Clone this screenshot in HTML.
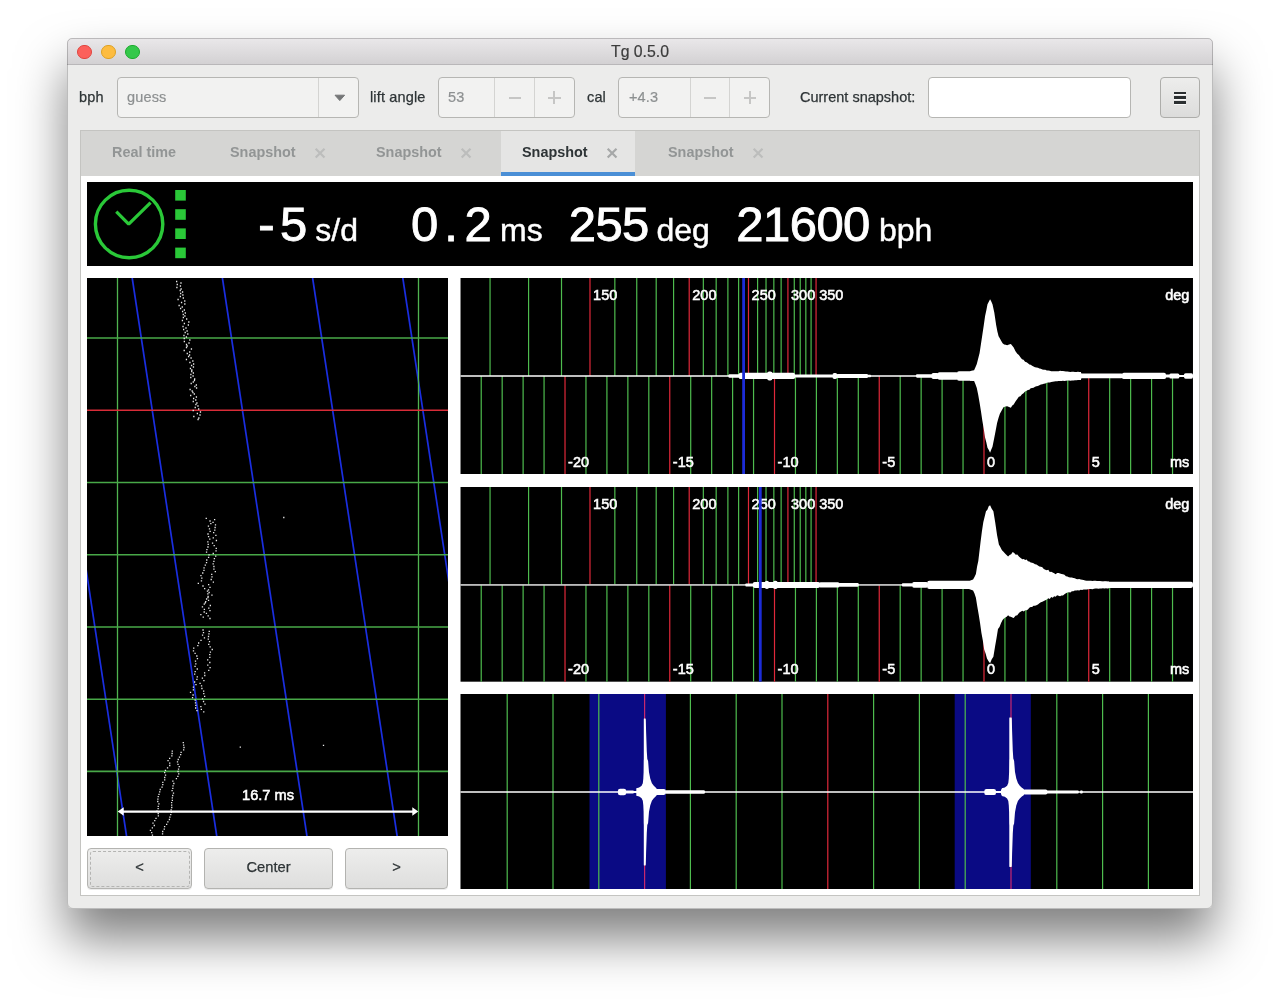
<!DOCTYPE html>
<html><head><meta charset="utf-8"><title>Tg 0.5.0</title>
<style>
*{box-sizing:border-box;margin:0;padding:0}
html,body{width:1280px;height:1005px;background:#fff;overflow:hidden}
body{position:relative;font-family:"Liberation Sans",sans-serif;font-size:14px;color:#2e3436}
.abs{position:absolute}
#win{will-change:transform;position:absolute;left:67px;top:38px;width:1146px;height:871px;background:#ececeb;border-radius:5px 5px 6px 6px;
 box-shadow:0 30px 50px rgba(0,0,0,.5)}
#title{position:absolute;left:0;top:0;width:1146px;height:27px;border-radius:5px 5px 0 0;
 background:linear-gradient(#eae8ea,#d3d1d3);border-bottom:1px solid #b9b7b9;text-align:center;
 font-size:15.8px;line-height:28px;color:#3c3c3c;-webkit-text-stroke:.2px #3c3c3c}
#win::after{content:"";position:absolute;left:0;top:0;right:0;bottom:0;border:1px solid rgba(0,0,0,.2);border-radius:5px 5px 6px 6px;pointer-events:none}
.tl{position:absolute;top:6.5px;width:14.6px;height:14.6px;border-radius:50%}
.lbl{position:absolute;font-size:14.5px;letter-spacing:.15px;line-height:16px;color:#2e3436;white-space:nowrap;-webkit-text-stroke:.25px #2e3436}
.box{position:absolute;top:39px;height:41px;border:1px solid #b6b6b3;border-radius:4px;background:#f2f2f1}
.sep{position:absolute;top:0;width:1px;height:39px;background:#d4d4d2}
.dim{position:absolute;color:#8d9091;font-size:14.5px;letter-spacing:.15px;line-height:16px;white-space:nowrap;-webkit-text-stroke:.2px #8d9091}
.pm{position:absolute;color:#c4c4c3;font-size:22px;line-height:22px;font-weight:400}
#nb{position:absolute;left:13px;top:92px;width:1120px;height:766px;background:#fff;border:1px solid #c4c4c1}
#tabs{position:absolute;left:0;top:0;width:1118px;height:44.7px;background:#d5d5d3}
.tab{position:absolute;top:0;height:44px;font-weight:bold;font-size:14.4px;line-height:16px;color:#929595;white-space:nowrap}
.tab span{position:absolute;top:13px}
.btn{position:absolute;top:811px;height:41px;border:1px solid #b3b3b0;border-radius:4px;
 background:linear-gradient(#ededec,#dededd);box-shadow:0 1px 0 rgba(0,0,0,.08);text-align:center;font-size:14.7px;line-height:37px;color:#2e3436;-webkit-text-stroke:.25px #2e3436}
.big{position:absolute;color:#fff;white-space:nowrap;font-size:49px;line-height:48px;-webkit-text-stroke:0.9px #fff}
.unit{position:absolute;color:#fff;white-space:nowrap;font-size:32px;line-height:32px;-webkit-text-stroke:0.45px #fff}
svg{position:absolute;display:block}
svg text{font-family:"Liberation Sans",sans-serif;fill:#fff}
svg text.b{font-weight:bold}
svg text.m{stroke:#fff;stroke-width:.55px}
</style></head>
<body>
<div id="win">
<div id="title">Tg 0.5.0<div class="tl" style="left:10.1px;background:#fc605b;border:1px solid #e0443e"></div><div class="tl" style="left:34.1px;background:#fdbc40;border:1px solid #dea123"></div><div class="tl" style="left:58.1px;background:#34c84a;border:1px solid #1baa2c"></div></div>
<div class="lbl" style="left:12px;top:51px">bph</div>
<div class="box" style="left:50px;width:242px"><div class="dim" style="left:9px;top:11px">guess</div><div class="sep" style="left:200px"></div><svg style="left:215px;top:16px" width="14" height="8"><path d="M2 1.2h9.6l-4.8 5.4z" fill="#747677" stroke="#747677" stroke-width="1" stroke-linejoin="round"/></svg></div>
<div class="lbl" style="left:303px;top:51px">lift angle</div>
<div class="box" style="left:371px;width:137px"><div class="dim" style="left:9px;top:11px">53</div><div class="sep" style="left:55px"></div><div class="sep" style="left:95px"></div><div class="abs" style="left:69.5px;top:18.5px;width:12.5px;height:2px;background:#c6c6c5"></div><div class="abs" style="left:109px;top:18.5px;width:12.5px;height:2px;background:#c6c6c5"></div><div class="abs" style="left:114.3px;top:13.2px;width:2px;height:12.5px;background:#c6c6c5"></div></div>
<div class="lbl" style="left:520px;top:51px">cal</div>
<div class="box" style="left:551px;width:152px"><div class="dim" style="left:10px;top:11px">+4.3</div><div class="sep" style="left:70.5px"></div><div class="sep" style="left:110px"></div><div class="abs" style="left:84.5px;top:18.5px;width:12.5px;height:2px;background:#c6c6c5"></div><div class="abs" style="left:124.5px;top:18.5px;width:12.5px;height:2px;background:#c6c6c5"></div><div class="abs" style="left:129.8px;top:13.2px;width:2px;height:12.5px;background:#c6c6c5"></div></div>
<div class="lbl" style="left:733px;top:51px;letter-spacing:0">Current snapshot:</div>
<div class="box" style="left:861px;width:203px;background:#fff"></div>
<div class="box" style="left:1093px;width:40px;background:linear-gradient(#ededec,#dcdcdb);border-color:#adadaa"><div class="abs" style="left:13.15px;top:13.5px;width:11.8px;height:2.4px;background:#2b2f31;box-shadow:0 1px 0 rgba(255,255,255,.75)"></div><div class="abs" style="left:13.15px;top:18.4px;width:11.8px;height:2.4px;background:#2b2f31;box-shadow:0 1px 0 rgba(255,255,255,.75)"></div><div class="abs" style="left:13.15px;top:23.2px;width:11.8px;height:2.4px;background:#2b2f31;box-shadow:0 1px 0 rgba(255,255,255,.75)"></div></div>
<div id="nb">
<div id="tabs"><div class="tab" style="left:0;width:128px"><span style="left:31px">Real time</span></div><div class="tab" style="left:128px;width:146px"><span style="left:21px">Snapshot</span><svg style="left:105px;top:16px" width="13" height="13"><path d="M1.7 1.7l8.8 8.8M10.5 1.7l-8.8 8.8" stroke="#bcbdbc" stroke-width="2.2" fill="none"/></svg></div><div class="tab" style="left:274px;width:146px"><span style="left:21px">Snapshot</span><svg style="left:105px;top:16px" width="13" height="13"><path d="M1.7 1.7l8.8 8.8M10.5 1.7l-8.8 8.8" stroke="#bcbdbc" stroke-width="2.2" fill="none"/></svg></div><div class="tab" style="left:420px;width:134px;background:#e5e5e4;color:#2e3436;height:44.7px;border-bottom:4px solid #4a8fd6"><span style="left:21px">Snapshot</span><svg style="left:105px;top:16px" width="13" height="13"><path d="M1.7 1.7l8.8 8.8M10.5 1.7l-8.8 8.8" stroke="#a6a8a8" stroke-width="2.2" fill="none"/></svg></div><div class="tab" style="left:554px;width:146px"><span style="left:33px">Snapshot</span><svg style="left:117px;top:16px" width="13" height="13"><path d="M1.7 1.7l8.8 8.8M10.5 1.7l-8.8 8.8" stroke="#bcbdbc" stroke-width="2.2" fill="none"/></svg></div></div>
<div class="abs" style="left:-81px;top:-131px;width:0;height:0">
<div class="abs" style="left:87px;top:182px;width:1106px;height:84px;background:#000"></div>
<svg style="left:87px;top:182px" width="120" height="84"><circle cx="42.1" cy="42" r="33.7" fill="none" stroke="#2ac838" stroke-width="3.4"/><path d="M29.3 29.6L41.7 42.2L63.6 20.6" fill="none" stroke="#2ac838" stroke-width="3.2" stroke-linejoin="bevel"/><rect x="88.2" y="8" width="10.6" height="10.6" fill="#2ac838"/><rect x="88.2" y="27.2" width="10.6" height="10.6" fill="#2ac838"/><rect x="88.2" y="46.4" width="10.6" height="10.6" fill="#2ac838"/><rect x="88.2" y="65.6" width="10.6" height="10.6" fill="#2ac838"/></svg>
<div class="big" style="left:253.2px;top:199.8px;width:26.7px;text-align:center">-</div><div class="big" style="left:279.9px;top:199.8px;width:26.7px;text-align:center">5</div><div class="unit" style="left:315.3px;top:213.5px">s/d</div><div class="big" style="left:411px;top:199.8px;width:26.7px;text-align:center">0</div><div class="big" style="left:437.7px;top:199.8px;width:26.7px;text-align:center">.</div><div class="big" style="left:464.4px;top:199.8px;width:26.7px;text-align:center">2</div><div class="unit" style="left:500px;top:213.5px">ms</div><div class="big" style="left:568.7px;top:199.8px;width:26.7px;text-align:center">2</div><div class="big" style="left:595.4px;top:199.8px;width:26.7px;text-align:center">5</div><div class="big" style="left:622.1px;top:199.8px;width:26.7px;text-align:center">5</div><div class="unit" style="left:656.5px;top:213.5px">deg</div><div class="big" style="left:736.3px;top:199.8px;width:26.7px;text-align:center">2</div><div class="big" style="left:763px;top:199.8px;width:26.7px;text-align:center">1</div><div class="big" style="left:789.7px;top:199.8px;width:26.7px;text-align:center">6</div><div class="big" style="left:816.4px;top:199.8px;width:26.7px;text-align:center">0</div><div class="big" style="left:843.1px;top:199.8px;width:26.7px;text-align:center">0</div><div class="unit" style="left:879px;top:213.5px">bph</div>
<svg style="left:87px;top:278px" width="361" height="558" viewBox="87 278 361 558"><rect x="87" y="278" width="361" height="558" fill="#000"/><line x1="40.48" y1="268" x2="128.05" y2="846" stroke="#1a2ee0" stroke-width="1.7"/><line x1="130.69" y1="268" x2="218.25" y2="846" stroke="#1a2ee0" stroke-width="1.7"/><line x1="220.89" y1="268" x2="308.45" y2="846" stroke="#1a2ee0" stroke-width="1.7"/><line x1="311.09" y1="268" x2="398.65" y2="846" stroke="#1a2ee0" stroke-width="1.7"/><line x1="401.29" y1="268" x2="488.85" y2="846" stroke="#1a2ee0" stroke-width="1.7"/><line x1="117.5" y1="278" x2="117.5" y2="836" stroke="#50b450" stroke-width="1.3"/><line x1="418.5" y1="278" x2="418.5" y2="836" stroke="#50b450" stroke-width="1.3"/><line x1="87" y1="338" x2="448" y2="338" stroke="#48a848" stroke-width="1.6"/><line x1="87" y1="410.3" x2="448" y2="410.3" stroke="#d82c38" stroke-width="1.6"/><line x1="87" y1="482.5" x2="448" y2="482.5" stroke="#48a848" stroke-width="1.6"/><line x1="87" y1="554.7" x2="448" y2="554.7" stroke="#48a848" stroke-width="1.6"/><line x1="87" y1="627" x2="448" y2="627" stroke="#48a848" stroke-width="1.6"/><line x1="87" y1="699.2" x2="448" y2="699.2" stroke="#48a848" stroke-width="1.6"/><line x1="87" y1="771.4" x2="448" y2="771.4" stroke="#48a848" stroke-width="1.6"/><path d="M176 281.5h1.3M180.33 283h1.3M176.62 284.5h1.3M179.78 286h1.3M176.24 287.5h1.3M180.49 289h1.3M179.57 290.5h1.3M181.92 292h1.3M180.02 293.5h1.3M182.22 295h1.3M179.69 296.5h1.3M182.67 298h1.3M177.44 299.5h1.3M184.11 301h1.3M180.91 302.5h1.3M184.17 304h1.3M178.48 305.5h1.3M181.62 307h1.3M179.96 308.5h1.3M183.72 310h1.3M181.95 311.5h1.3M184.66 313h1.3M182.62 314.5h1.3M184.23 316h1.3M182.7 317.5h1.3M186.01 319h1.3M181.77 320.5h1.3M188.17 322h1.3M183.72 323.5h1.3M187.71 325h1.3M182.37 326.5h1.3M185.33 328h1.3M182.99 329.5h1.3M186.43 331h1.3M184.54 332.5h1.3M187.15 334h1.3M183.33 335.5h1.3M185.76 337h1.3M183.59 338.5h1.3M189.19 340h1.3M183.7 341.5h1.3M188.36 343h1.3M185.85 344.5h1.3M186.51 346h1.3M185.83 347.5h1.3M190.78 349h1.3M183.55 350.5h1.3M189.08 352h1.3M186.62 353.5h1.3M188.91 355h1.3M187.94 356.5h1.3M190.43 358h1.3M185.79 359.5h1.3M192.18 361h1.3M189.27 362.5h1.3M192.96 364h1.3M190.94 365.5h1.3M192.8 367h1.3M189.78 368.5h1.3M191.18 370h1.3M191.08 371.5h1.3M192.72 373h1.3M190.24 374.5h1.3M192.44 376h1.3M190.14 377.5h1.3M194.03 379h1.3M193.79 380.5h1.3M192.61 382h1.3M190.54 383.5h1.3M195.71 385h1.3M194.22 386.5h1.3M195.93 388h1.3M189.47 389.5h1.3M191.51 391h1.3M192.27 392.5h1.3M193.68 394h1.3M190.04 395.5h1.3M195.75 397h1.3M192.97 398.5h1.3M195.1 400h1.3M192.62 401.5h1.3M196.27 403h1.3M195.24 404.5h1.3M197.32 406h1.3M194.58 407.5h1.3M198.02 409h1.3M192.57 410.5h1.3M199.81 412h1.3M196.71 413.5h1.3M199.35 415h1.3M193.19 416.5h1.3M198.21 418h1.3M197.42 419.5h1.3M205.6 518.4h1.3M213.97 519.7h1.3M209.4 521h1.3M212.39 522.3h1.3M210.18 523.6h1.3M214.84 524.9h1.3M207.78 526.2h1.3M214.47 527.5h1.3M208.83 528.8h1.3M214.13 530.1h1.3M209.48 531.4h1.3M213.01 532.7h1.3M207.35 534h1.3M215.25 535.3h1.3M207.92 536.6h1.3M212.63 537.9h1.3M209.14 539.2h1.3M215.77 540.5h1.3M207.21 541.8h1.3M211.91 543.1h1.3M207.58 544.4h1.3M213.54 545.7h1.3M207.31 547h1.3M215.61 548.3h1.3M206.27 549.6h1.3M215.39 550.9h1.3M205.89 552.2h1.3M212.6 553.5h1.3M208.41 554.8h1.3M215.06 556.1h1.3M207.93 557.4h1.3M213.75 558.7h1.3M206.13 560h1.3M213.23 561.3h1.3M205.87 562.6h1.3M212.52 563.9h1.3M204.63 565.2h1.3M213.27 566.5h1.3M203.42 567.8h1.3M213.26 569.1h1.3M203.31 570.4h1.3M214.66 571.7h1.3M202.11 573h1.3M211.09 574.3h1.3M200.29 575.6h1.3M211.36 576.9h1.3M201.17 578.2h1.3M210.55 579.5h1.3M200.78 580.8h1.3M212.74 582.1h1.3M197.67 583.4h1.3M207.99 584.7h1.3M202.34 586h1.3M209.35 587.3h1.3M204.03 588.6h1.3M207.87 589.9h1.3M206.8 591.2h1.3M208.48 592.5h1.3M207.18 593.8h1.3M211.29 595.1h1.3M207.46 596.4h1.3M207.36 597.7h1.3M205.95 599h1.3M207.9 600.3h1.3M205.1 601.6h1.3M204.62 602.9h1.3M203.62 604.2h1.3M209.67 605.5h1.3M201.79 606.8h1.3M208.14 608.1h1.3M203.73 609.4h1.3M209.31 610.7h1.3M203.54 612h1.3M205.79 613.3h1.3M200.21 614.6h1.3M207.52 615.9h1.3M202.61 617.2h1.3M209.33 618.5h1.3M202.4 630h1.3M208.61 631.3h1.3M202.86 632.6h1.3M208.3 633.9h1.3M201.91 635.2h1.3M207.87 636.5h1.3M203.8 637.8h1.3M207.64 639.1h1.3M200.36 640.4h1.3M208.85 641.7h1.3M197.98 643h1.3M208.08 644.3h1.3M197.19 645.6h1.3M209.52 646.9h1.3M193.08 648.2h1.3M211.58 649.5h1.3M192.81 650.8h1.3M209.76 652.1h1.3M194.45 653.4h1.3M209.1 654.7h1.3M196.19 656h1.3M209.18 657.3h1.3M196.79 658.6h1.3M207.03 659.9h1.3M194.82 661.2h1.3M209.17 662.5h1.3M195.19 663.8h1.3M207.14 665.1h1.3M194.41 666.4h1.3M209.44 667.7h1.3M196.62 669h1.3M208.11 670.3h1.3M194.54 671.6h1.3M203.95 672.9h1.3M194.02 674.2h1.3M204.14 675.5h1.3M196.65 676.8h1.3M201.75 678.1h1.3M196.25 679.4h1.3M203.25 680.7h1.3M193.96 682h1.3M199.42 683.3h1.3M195.33 684.6h1.3M200.92 685.9h1.3M192.74 687.2h1.3M201.27 688.5h1.3M192.72 689.8h1.3M203 691.1h1.3M189.87 692.4h1.3M203.13 693.7h1.3M192.44 695h1.3M204 696.3h1.3M191.9 697.6h1.3M201.93 698.9h1.3M194.52 700.2h1.3M202.88 701.5h1.3M194.84 702.8h1.3M204.32 704.1h1.3M195.15 705.4h1.3M200.22 706.7h1.3M194.98 708h1.3M200.71 709.3h1.3M196.28 710.6h1.3M203.1 711.9h1.3M182.64 742.7h1.3M182.95 745.1h1.3M183.37 747.5h1.3M182.99 749.9h1.3M171.61 751.1h1.3M180.46 752.3h1.3M171.47 753.5h1.3M180.02 754.7h1.3M171.22 755.9h1.3M178.83 757.1h1.3M169.01 758.3h1.3M177.59 759.5h1.3M167.4 760.7h1.3M176.84 761.9h1.3M169.06 763.1h1.3M177.37 764.3h1.3M169.1 765.5h1.3M178.59 766.7h1.3M166.89 767.9h1.3M177.88 769.1h1.3M164.81 770.3h1.3M177.39 771.5h1.3M164.02 772.7h1.3M178.08 773.9h1.3M164.9 775.1h1.3M177.23 776.3h1.3M164.07 777.5h1.3M175.77 778.7h1.3M164.04 779.9h1.3M172.21 781.1h1.3M162.17 782.3h1.3M173.2 783.5h1.3M162.13 784.7h1.3M172.35 785.9h1.3M161.39 787.1h1.3M172.15 788.3h1.3M159.59 789.5h1.3M171.44 790.7h1.3M159.06 791.9h1.3M172.84 793.1h1.3M158.35 794.3h1.3M172.09 795.5h1.3M157.58 796.7h1.3M171.66 797.9h1.3M157.24 799.1h1.3M171.7 800.3h1.3M157.12 801.5h1.3M170.97 802.7h1.3M158.25 803.9h1.3M171.03 805.1h1.3M157.57 806.3h1.3M171.11 807.5h1.3M157.49 808.7h1.3M170.49 809.9h1.3M156.35 811.1h1.3M170.8 812.3h1.3M157.57 813.5h1.3M170.1 814.7h1.3M157.74 815.9h1.3M169.24 817.1h1.3M155.37 818.3h1.3M168.76 819.5h1.3M154.11 820.7h1.3M167.22 821.9h1.3M152.34 823.1h1.3M166 824.3h1.3M153.64 825.5h1.3M163.96 826.7h1.3M151.74 827.9h1.3M163.6 829.1h1.3M149.77 830.3h1.3M162.06 831.5h1.3M151.04 832.7h1.3M161.9 833.9h1.3M151.82 835.1h1.3M283.15 517.5h1.3M239.65 747.2h1.3M322.85 745.3h1.3" stroke="#ececec" stroke-width="1.3" fill="none"/><line x1="121" y1="811.6" x2="415" y2="811.6" stroke="#fff" stroke-width="2.4"/><path d="M117.7 811.5l6 -4.3v8.6z M418.3 811.5l-6 -4.3v8.6z" fill="#fff"/><text class="m" x="268" y="800.4" font-size="14.6" text-anchor="middle">16.7 ms</text></svg>
<div class="btn" style="left:87px;top:848px;width:105px"><div class="abs" style="left:1.5px;top:1.5px;right:1.5px;bottom:1.5px;border:1px dashed #b4b4b2;border-radius:3px"></div>&lt;</div><div class="btn" style="left:204px;top:848px;width:129px">Center</div><div class="btn" style="left:345px;top:848px;width:103px">&gt;</div>
<svg style="left:460px;top:278.3px" width="734" height="196.2" viewBox="460 278.3 734 196.2"><rect x="460.5" y="278.3" width="732.5" height="196.2" fill="#000"/><line x1="490.03" y1="278.3" x2="490.03" y2="376.25" stroke="#4ebc4e" stroke-width="1.2"/><line x1="528.56" y1="278.3" x2="528.56" y2="376.25" stroke="#4ebc4e" stroke-width="1.2"/><line x1="561.49" y1="278.3" x2="561.49" y2="376.25" stroke="#4ebc4e" stroke-width="1.2"/><line x1="589.97" y1="278.3" x2="589.97" y2="376.25" stroke="#e0283a" stroke-width="1.2"/><line x1="614.83" y1="278.3" x2="614.83" y2="376.25" stroke="#4ebc4e" stroke-width="1.2"/><line x1="636.74" y1="278.3" x2="636.74" y2="376.25" stroke="#4ebc4e" stroke-width="1.2"/><line x1="656.19" y1="278.3" x2="656.19" y2="376.25" stroke="#4ebc4e" stroke-width="1.2"/><line x1="673.57" y1="278.3" x2="673.57" y2="376.25" stroke="#4ebc4e" stroke-width="1.2"/><line x1="689.2" y1="278.3" x2="689.2" y2="376.25" stroke="#e0283a" stroke-width="1.2"/><line x1="703.33" y1="278.3" x2="703.33" y2="376.25" stroke="#4ebc4e" stroke-width="1.2"/><line x1="716.17" y1="278.3" x2="716.17" y2="376.25" stroke="#4ebc4e" stroke-width="1.2"/><line x1="727.88" y1="278.3" x2="727.88" y2="376.25" stroke="#4ebc4e" stroke-width="1.2"/><line x1="738.61" y1="278.3" x2="738.61" y2="376.25" stroke="#4ebc4e" stroke-width="1.2"/><line x1="748.48" y1="278.3" x2="748.48" y2="376.25" stroke="#e0283a" stroke-width="1.2"/><line x1="757.59" y1="278.3" x2="757.59" y2="376.25" stroke="#4ebc4e" stroke-width="1.2"/><line x1="766.02" y1="278.3" x2="766.02" y2="376.25" stroke="#4ebc4e" stroke-width="1.2"/><line x1="773.84" y1="278.3" x2="773.84" y2="376.25" stroke="#4ebc4e" stroke-width="1.2"/><line x1="781.13" y1="278.3" x2="781.13" y2="376.25" stroke="#4ebc4e" stroke-width="1.2"/><line x1="787.92" y1="278.3" x2="787.92" y2="376.25" stroke="#e0283a" stroke-width="1.2"/><line x1="794.28" y1="278.3" x2="794.28" y2="376.25" stroke="#4ebc4e" stroke-width="1.2"/><line x1="800.23" y1="278.3" x2="800.23" y2="376.25" stroke="#4ebc4e" stroke-width="1.2"/><line x1="805.83" y1="278.3" x2="805.83" y2="376.25" stroke="#4ebc4e" stroke-width="1.2"/><line x1="811.09" y1="278.3" x2="811.09" y2="376.25" stroke="#4ebc4e" stroke-width="1.2"/><line x1="816.06" y1="278.3" x2="816.06" y2="376.25" stroke="#e0283a" stroke-width="1.2"/><line x1="481.2" y1="376.25" x2="481.2" y2="474.5" stroke="#4ebc4e" stroke-width="1.2"/><line x1="502.15" y1="376.25" x2="502.15" y2="474.5" stroke="#4ebc4e" stroke-width="1.2"/><line x1="523.1" y1="376.25" x2="523.1" y2="474.5" stroke="#4ebc4e" stroke-width="1.2"/><line x1="544.05" y1="376.25" x2="544.05" y2="474.5" stroke="#4ebc4e" stroke-width="1.2"/><line x1="565" y1="376.25" x2="565" y2="474.5" stroke="#e0283a" stroke-width="1.2"/><line x1="585.95" y1="376.25" x2="585.95" y2="474.5" stroke="#4ebc4e" stroke-width="1.2"/><line x1="606.9" y1="376.25" x2="606.9" y2="474.5" stroke="#4ebc4e" stroke-width="1.2"/><line x1="627.85" y1="376.25" x2="627.85" y2="474.5" stroke="#4ebc4e" stroke-width="1.2"/><line x1="648.8" y1="376.25" x2="648.8" y2="474.5" stroke="#4ebc4e" stroke-width="1.2"/><line x1="669.75" y1="376.25" x2="669.75" y2="474.5" stroke="#e0283a" stroke-width="1.2"/><line x1="690.7" y1="376.25" x2="690.7" y2="474.5" stroke="#4ebc4e" stroke-width="1.2"/><line x1="711.65" y1="376.25" x2="711.65" y2="474.5" stroke="#4ebc4e" stroke-width="1.2"/><line x1="732.6" y1="376.25" x2="732.6" y2="474.5" stroke="#4ebc4e" stroke-width="1.2"/><line x1="753.55" y1="376.25" x2="753.55" y2="474.5" stroke="#4ebc4e" stroke-width="1.2"/><line x1="774.5" y1="376.25" x2="774.5" y2="474.5" stroke="#e0283a" stroke-width="1.2"/><line x1="795.45" y1="376.25" x2="795.45" y2="474.5" stroke="#4ebc4e" stroke-width="1.2"/><line x1="816.4" y1="376.25" x2="816.4" y2="474.5" stroke="#4ebc4e" stroke-width="1.2"/><line x1="837.35" y1="376.25" x2="837.35" y2="474.5" stroke="#4ebc4e" stroke-width="1.2"/><line x1="858.3" y1="376.25" x2="858.3" y2="474.5" stroke="#4ebc4e" stroke-width="1.2"/><line x1="879.25" y1="376.25" x2="879.25" y2="474.5" stroke="#e0283a" stroke-width="1.2"/><line x1="900.2" y1="376.25" x2="900.2" y2="474.5" stroke="#4ebc4e" stroke-width="1.2"/><line x1="921.15" y1="376.25" x2="921.15" y2="474.5" stroke="#4ebc4e" stroke-width="1.2"/><line x1="942.1" y1="376.25" x2="942.1" y2="474.5" stroke="#4ebc4e" stroke-width="1.2"/><line x1="963.05" y1="376.25" x2="963.05" y2="474.5" stroke="#4ebc4e" stroke-width="1.2"/><line x1="984" y1="376.25" x2="984" y2="474.5" stroke="#e0283a" stroke-width="1.2"/><line x1="1004.95" y1="376.25" x2="1004.95" y2="474.5" stroke="#4ebc4e" stroke-width="1.2"/><line x1="1025.9" y1="376.25" x2="1025.9" y2="474.5" stroke="#4ebc4e" stroke-width="1.2"/><line x1="1046.85" y1="376.25" x2="1046.85" y2="474.5" stroke="#4ebc4e" stroke-width="1.2"/><line x1="1067.8" y1="376.25" x2="1067.8" y2="474.5" stroke="#4ebc4e" stroke-width="1.2"/><line x1="1088.75" y1="376.25" x2="1088.75" y2="474.5" stroke="#e0283a" stroke-width="1.2"/><line x1="1109.7" y1="376.25" x2="1109.7" y2="474.5" stroke="#4ebc4e" stroke-width="1.2"/><line x1="1130.65" y1="376.25" x2="1130.65" y2="474.5" stroke="#4ebc4e" stroke-width="1.2"/><line x1="1151.6" y1="376.25" x2="1151.6" y2="474.5" stroke="#4ebc4e" stroke-width="1.2"/><line x1="1172.55" y1="376.25" x2="1172.55" y2="474.5" stroke="#4ebc4e" stroke-width="1.2"/><line x1="460.5" y1="376.25" x2="1193" y2="376.25" stroke="#fff" stroke-width="1.4"/><rect x="728.4" y="374.45" width="11.6" height="3.6" rx="1.08" fill="#fff"/><rect x="738.75" y="373.15" width="56.25" height="6.2" rx="1.86" fill="#fff"/><rect x="767.2" y="371.75" width="5.2" height="9" rx="2" fill="#fff"/><rect x="794" y="374.75" width="39" height="3" rx="0.9" fill="#fff"/><rect x="832.5" y="373.25" width="4.7" height="6" rx="1.8" fill="#fff"/><rect x="836.5" y="374.25" width="31.5" height="4" rx="1.2" fill="#fff"/><rect x="867" y="375.05" width="4" height="2.4" rx="0.72" fill="#fff"/><rect x="916" y="374.55" width="17" height="3.4" rx="1.02" fill="#fff"/><rect x="931.5" y="373.25" width="7.5" height="6" rx="1.8" fill="#fff"/><rect x="937.5" y="372.55" width="21" height="7.4" rx="2" fill="#fff"/><rect x="957" y="371.45" width="18" height="9.6" rx="2" fill="#fff"/><rect x="1060" y="372.25" width="21.5" height="8" rx="2" fill="#fff"/><rect x="1080" y="373.9" width="42.6" height="4.7" rx="1.41" fill="#fff"/><rect x="1122" y="373.1" width="44" height="6.3" rx="1.89" fill="#fff"/><rect x="1165" y="374.75" width="5" height="3" rx="0.9" fill="#fff"/><rect x="1169.3" y="373.75" width="10.1" height="5" rx="1.5" fill="#fff"/><rect x="1178" y="375.25" width="7" height="2" rx="0.6" fill="#fff"/><rect x="1184" y="373.55" width="9" height="5.4" rx="1.62" fill="#fff"/><path d="M970 371.75L971.37 371.14L972.73 370.8L974.1 370.55L975.45 367.66L976.8 364.25L978.2 358.83L979.6 353.25L981 344.03L982.4 334.85L983.75 325.79L985.1 316.35L986.3 310.77L987.5 304.45L988.8 302.17L990.1 299.45L991.3 301.68L992.5 304.45L994.3 312.75L996.2 325.65L997.4 331.73L998.6 336.65L999.93 338.92L1001.27 341.39L1002.6 343.65L1004.13 344.86L1005.67 345.12L1007.2 345.55L1009.05 344.8L1010.9 344.35L1012.3 346.04L1013.7 347.75L1015.5 351.47L1017.3 354.15L1018.87 355.4L1020.43 357.47L1022 359.65L1023.53 360.02L1025.07 361.99L1026.6 362.45L1027.97 363.63L1029.35 364.77L1030.72 364.96L1032.1 366.15L1033.56 366.88L1035.02 367.52L1036.48 367.83L1037.94 368.03L1039.4 368.85L1040.88 369.04L1042.36 369.75L1043.84 370.18L1045.32 370.16L1046.8 370.75L1048.28 370.9L1049.76 371.02L1051.24 371.46L1052.72 371.65L1054.2 371.65L1055.66 371.49L1057.12 371.52L1058.58 371.59L1060.04 371.15L1061.5 371.25L1062.98 371.35L1064.46 371.45L1065.94 371.89L1067.42 371.76L1068.9 372.05L1070.41 372.24L1071.93 372L1073.44 372.18L1074.95 372.26L1076.46 372.22L1077.97 372.13L1079.49 372.39L1081 372.35L1081 380.35L1079.5 380.4L1078 380.41L1076.5 380.46L1075 380.55L1073.5 380.76L1072 380.91L1070.5 380.97L1069 380.74L1067.5 380.84L1066 380.94L1064.5 381.21L1063 381L1061.5 381.25L1060.04 381.19L1058.58 381.25L1057.12 381.48L1055.66 381.61L1054.2 381.75L1052.72 382.08L1051.24 382.38L1049.76 382.71L1048.28 382.7L1046.8 383.05L1045.32 383.83L1043.84 384.13L1042.36 384.49L1040.88 384.89L1039.4 385.45L1037.94 386.29L1036.48 386.57L1035.02 387.07L1033.56 388L1032.1 388.25L1030.72 388.5L1029.35 390.1L1027.97 390.24L1026.6 390.95L1025.07 391.81L1023.53 393.48L1022 394.65L1020.43 396.46L1018.87 397.14L1017.3 399.25L1015.5 401.7L1013.7 404.75L1012.3 405.87L1010.9 408.15L1009.05 407.22L1007.2 406.65L1005.35 406.71L1003.5 407.55L1001.7 410.8L999.9 414.05L998.5 418.4L997.1 423.25L995.7 430.91L994.3 437.95L992.5 447.15L991.3 449.87L990.1 453.05L988.8 450.32L987.5 448.05L986.3 442.64L985.1 437.95L983.75 429.06L982.4 421.25L981 411.69L979.6 402.95L978.2 395.13L976.8 388.25L975.45 384.56L974.1 381.25L972.73 381.19L971.37 380.96L970 381.05z" fill="#fff"/><text class="m" x="593.07" y="300" font-size="14.5">150</text><text class="m" x="692.3" y="300" font-size="14.5">200</text><text class="m" x="751.58" y="300" font-size="14.5">250</text><text class="m" x="791.02" y="300" font-size="14.5">300</text><text class="m" x="819.16" y="300" font-size="14.5">350</text><text class="m" x="568.1" y="466.9" font-size="14.5">-20</text><text class="m" x="672.85" y="466.9" font-size="14.5">-15</text><text class="m" x="777.6" y="466.9" font-size="14.5">-10</text><text class="m" x="882.35" y="466.9" font-size="14.5">-5</text><text class="m" x="987.1" y="466.9" font-size="14.5">0</text><text class="m" x="1091.85" y="466.9" font-size="14.5">5</text><text class="m" x="1189.4" y="300" font-size="14.5" text-anchor="end">deg</text><text class="m" x="1189.4" y="466.9" font-size="14.5" text-anchor="end">ms</text><line x1="743.6" y1="278.3" x2="743.6" y2="474.5" stroke="#1c2cd8" stroke-width="2.8"/></svg>
<svg style="left:460px;top:487px" width="734" height="194.7" viewBox="460 487 734 194.7"><rect x="460.5" y="487" width="732.5" height="194.7" fill="#000"/><line x1="490.03" y1="487" x2="490.03" y2="584.9" stroke="#4ebc4e" stroke-width="1.2"/><line x1="528.56" y1="487" x2="528.56" y2="584.9" stroke="#4ebc4e" stroke-width="1.2"/><line x1="561.49" y1="487" x2="561.49" y2="584.9" stroke="#4ebc4e" stroke-width="1.2"/><line x1="589.97" y1="487" x2="589.97" y2="584.9" stroke="#e0283a" stroke-width="1.2"/><line x1="614.83" y1="487" x2="614.83" y2="584.9" stroke="#4ebc4e" stroke-width="1.2"/><line x1="636.74" y1="487" x2="636.74" y2="584.9" stroke="#4ebc4e" stroke-width="1.2"/><line x1="656.19" y1="487" x2="656.19" y2="584.9" stroke="#4ebc4e" stroke-width="1.2"/><line x1="673.57" y1="487" x2="673.57" y2="584.9" stroke="#4ebc4e" stroke-width="1.2"/><line x1="689.2" y1="487" x2="689.2" y2="584.9" stroke="#e0283a" stroke-width="1.2"/><line x1="703.33" y1="487" x2="703.33" y2="584.9" stroke="#4ebc4e" stroke-width="1.2"/><line x1="716.17" y1="487" x2="716.17" y2="584.9" stroke="#4ebc4e" stroke-width="1.2"/><line x1="727.88" y1="487" x2="727.88" y2="584.9" stroke="#4ebc4e" stroke-width="1.2"/><line x1="738.61" y1="487" x2="738.61" y2="584.9" stroke="#4ebc4e" stroke-width="1.2"/><line x1="748.48" y1="487" x2="748.48" y2="584.9" stroke="#e0283a" stroke-width="1.2"/><line x1="757.59" y1="487" x2="757.59" y2="584.9" stroke="#4ebc4e" stroke-width="1.2"/><line x1="766.02" y1="487" x2="766.02" y2="584.9" stroke="#4ebc4e" stroke-width="1.2"/><line x1="773.84" y1="487" x2="773.84" y2="584.9" stroke="#4ebc4e" stroke-width="1.2"/><line x1="781.13" y1="487" x2="781.13" y2="584.9" stroke="#4ebc4e" stroke-width="1.2"/><line x1="787.92" y1="487" x2="787.92" y2="584.9" stroke="#e0283a" stroke-width="1.2"/><line x1="794.28" y1="487" x2="794.28" y2="584.9" stroke="#4ebc4e" stroke-width="1.2"/><line x1="800.23" y1="487" x2="800.23" y2="584.9" stroke="#4ebc4e" stroke-width="1.2"/><line x1="805.83" y1="487" x2="805.83" y2="584.9" stroke="#4ebc4e" stroke-width="1.2"/><line x1="811.09" y1="487" x2="811.09" y2="584.9" stroke="#4ebc4e" stroke-width="1.2"/><line x1="816.06" y1="487" x2="816.06" y2="584.9" stroke="#e0283a" stroke-width="1.2"/><line x1="481.2" y1="584.9" x2="481.2" y2="681.7" stroke="#4ebc4e" stroke-width="1.2"/><line x1="502.15" y1="584.9" x2="502.15" y2="681.7" stroke="#4ebc4e" stroke-width="1.2"/><line x1="523.1" y1="584.9" x2="523.1" y2="681.7" stroke="#4ebc4e" stroke-width="1.2"/><line x1="544.05" y1="584.9" x2="544.05" y2="681.7" stroke="#4ebc4e" stroke-width="1.2"/><line x1="565" y1="584.9" x2="565" y2="681.7" stroke="#e0283a" stroke-width="1.2"/><line x1="585.95" y1="584.9" x2="585.95" y2="681.7" stroke="#4ebc4e" stroke-width="1.2"/><line x1="606.9" y1="584.9" x2="606.9" y2="681.7" stroke="#4ebc4e" stroke-width="1.2"/><line x1="627.85" y1="584.9" x2="627.85" y2="681.7" stroke="#4ebc4e" stroke-width="1.2"/><line x1="648.8" y1="584.9" x2="648.8" y2="681.7" stroke="#4ebc4e" stroke-width="1.2"/><line x1="669.75" y1="584.9" x2="669.75" y2="681.7" stroke="#e0283a" stroke-width="1.2"/><line x1="690.7" y1="584.9" x2="690.7" y2="681.7" stroke="#4ebc4e" stroke-width="1.2"/><line x1="711.65" y1="584.9" x2="711.65" y2="681.7" stroke="#4ebc4e" stroke-width="1.2"/><line x1="732.6" y1="584.9" x2="732.6" y2="681.7" stroke="#4ebc4e" stroke-width="1.2"/><line x1="753.55" y1="584.9" x2="753.55" y2="681.7" stroke="#4ebc4e" stroke-width="1.2"/><line x1="774.5" y1="584.9" x2="774.5" y2="681.7" stroke="#e0283a" stroke-width="1.2"/><line x1="795.45" y1="584.9" x2="795.45" y2="681.7" stroke="#4ebc4e" stroke-width="1.2"/><line x1="816.4" y1="584.9" x2="816.4" y2="681.7" stroke="#4ebc4e" stroke-width="1.2"/><line x1="837.35" y1="584.9" x2="837.35" y2="681.7" stroke="#4ebc4e" stroke-width="1.2"/><line x1="858.3" y1="584.9" x2="858.3" y2="681.7" stroke="#4ebc4e" stroke-width="1.2"/><line x1="879.25" y1="584.9" x2="879.25" y2="681.7" stroke="#e0283a" stroke-width="1.2"/><line x1="900.2" y1="584.9" x2="900.2" y2="681.7" stroke="#4ebc4e" stroke-width="1.2"/><line x1="921.15" y1="584.9" x2="921.15" y2="681.7" stroke="#4ebc4e" stroke-width="1.2"/><line x1="942.1" y1="584.9" x2="942.1" y2="681.7" stroke="#4ebc4e" stroke-width="1.2"/><line x1="963.05" y1="584.9" x2="963.05" y2="681.7" stroke="#4ebc4e" stroke-width="1.2"/><line x1="984" y1="584.9" x2="984" y2="681.7" stroke="#e0283a" stroke-width="1.2"/><line x1="1004.95" y1="584.9" x2="1004.95" y2="681.7" stroke="#4ebc4e" stroke-width="1.2"/><line x1="1025.9" y1="584.9" x2="1025.9" y2="681.7" stroke="#4ebc4e" stroke-width="1.2"/><line x1="1046.85" y1="584.9" x2="1046.85" y2="681.7" stroke="#4ebc4e" stroke-width="1.2"/><line x1="1067.8" y1="584.9" x2="1067.8" y2="681.7" stroke="#4ebc4e" stroke-width="1.2"/><line x1="1088.75" y1="584.9" x2="1088.75" y2="681.7" stroke="#e0283a" stroke-width="1.2"/><line x1="1109.7" y1="584.9" x2="1109.7" y2="681.7" stroke="#4ebc4e" stroke-width="1.2"/><line x1="1130.65" y1="584.9" x2="1130.65" y2="681.7" stroke="#4ebc4e" stroke-width="1.2"/><line x1="1151.6" y1="584.9" x2="1151.6" y2="681.7" stroke="#4ebc4e" stroke-width="1.2"/><line x1="1172.55" y1="584.9" x2="1172.55" y2="681.7" stroke="#4ebc4e" stroke-width="1.2"/><line x1="460.5" y1="584.9" x2="1193" y2="584.9" stroke="#fff" stroke-width="1.4"/><line x1="460.5" y1="584.9" x2="745.3" y2="584.9" stroke="#b9b9b9" stroke-width="1.4"/><line x1="858.75" y1="584.9" x2="901.9" y2="584.9" stroke="#b9b9b9" stroke-width="1.4"/><rect x="745.3" y="583.4" width="8.7" height="3" rx="0.9" fill="#fff"/><rect x="752.8" y="581.9" width="67.2" height="6" rx="1.8" fill="#fff"/><rect x="764.8" y="580.7" width="4.2" height="8.4" rx="2" fill="#fff"/><rect x="773" y="580.7" width="4.6" height="8.4" rx="2" fill="#fff"/><rect x="819" y="582.3" width="20.5" height="5.2" rx="1.56" fill="#fff"/><rect x="838.5" y="583.1" width="20.25" height="3.6" rx="1.08" fill="#fff"/><rect x="901.9" y="583.3" width="11.1" height="3.2" rx="0.96" fill="#fff"/><rect x="912.2" y="582.1" width="15.8" height="5.6" rx="1.68" fill="#fff"/><rect x="927.2" y="580.8" width="43.8" height="8.2" rx="2" fill="#fff"/><rect x="1100" y="581.85" width="93" height="6.1" rx="1.83" fill="#fff"/><path d="M969 580.9L970.37 580.62L971.73 579.94L973.1 579.4L974.5 576.93L975.9 573.9L977.1 566.48L978.3 560.9L980.5 542.5L981.9 531.45L983.3 522.3L984.65 516.66L986 511.2L987.37 509.74L988.73 506.34L990.1 505.3L991.75 508.63L993.4 511.2L995.2 522.3L997.1 535.2L998.9 544.4L1000.43 547.15L1001.97 550.33L1003.5 551.8L1005.03 553.57L1006.57 554.92L1008.1 556.4L1009.63 554.96L1011.17 554.13L1012.7 552.1L1014.23 552.89L1015.77 554.69L1017.3 554.5L1019.15 556.82L1021 558.2L1022.4 559.35L1023.8 559.05L1025.2 560.09L1026.6 559.5L1027.97 561.28L1029.35 561.54L1030.72 562.51L1032.1 562.8L1033.56 563.37L1035.02 564.22L1036.48 564.52L1037.94 565.44L1039.4 566.5L1040.88 566.81L1042.36 567.22L1043.84 568.94L1045.32 569.81L1046.8 570.2L1048.28 569.85L1049.76 572.11L1051.24 571.65L1052.72 572.43L1054.2 573.3L1055.66 574.17L1057.12 573L1058.58 573.03L1060.04 573.58L1061.5 573.9L1062.98 574.21L1064.46 574.79L1065.94 576.34L1067.42 576.51L1068.9 577.2L1070.38 577.56L1071.86 577.59L1073.34 577.99L1074.82 578.35L1076.3 579L1077.76 579.15L1079.22 579.13L1080.68 579.52L1082.14 579.74L1083.6 580.1L1085.08 580.4L1086.56 580.65L1088.04 580.69L1089.52 580.67L1091 580.7L1092.5 581L1094 580.64L1095.5 580.87L1097 580.89L1098.5 580.96L1100 581L1101.5 581.17L1103 581.49L1104.5 581.15L1106 581.24L1107.5 581.43L1109 581.5L1109 588.3L1107.5 588.53L1106 588.32L1104.5 588.4L1103 588.35L1101.5 588.49L1100 588.62L1098.5 588.7L1097 588.49L1095.5 588.56L1094 588.88L1092.5 589.17L1091 589L1089.52 588.94L1088.04 589.32L1086.56 589.54L1085.08 589.41L1083.6 589.5L1082.14 589.92L1080.68 589.64L1079.22 590.44L1077.76 590.32L1076.3 590.5L1074.82 590.55L1073.34 591.29L1071.86 591.3L1070.38 592.39L1068.9 592.3L1067.42 592.63L1065.94 593.33L1064.46 594.21L1062.98 595.61L1061.5 595.6L1060.04 596.24L1058.58 595.82L1057.12 595.25L1055.66 596.86L1054.2 596.3L1052.72 597.78L1051.24 597.07L1049.76 599.03L1048.28 598.18L1046.8 599.6L1045.32 600.27L1043.84 601.01L1042.36 601.85L1040.88 602.14L1039.4 603.3L1037.94 604.39L1036.48 605.16L1035.02 605.86L1033.56 605.8L1032.1 607L1030.72 606.95L1029.35 607.67L1027.97 609.61L1026.6 610.3L1025.2 610.23L1023.8 611.44L1022.4 610.78L1021 611.6L1019.15 612.74L1017.3 615.3L1015.5 615.8L1013.7 618L1012.3 617.61L1010.9 616.88L1009.5 616.51L1008.1 615.3L1006.73 616.82L1005.35 617.56L1003.98 618.52L1002.6 619.9L1001.07 622.95L999.53 626.98L998 629.1L996.6 637.88L995.2 645.7L993.4 656.7L991.75 659.36L990.1 663.2L988.55 661.36L987 658.6L985.6 653.53L984.2 649.4L982.8 640.25L981.4 632.8L980.05 623.1L978.7 614.4L977.3 606.57L975.9 597.8L974.5 593.53L973.1 590.4L971.73 590.01L970.37 589.42L969 588.9z" fill="#fff"/><text class="m" x="593.07" y="508.7" font-size="14.5">150</text><text class="m" x="692.3" y="508.7" font-size="14.5">200</text><text class="m" x="751.58" y="508.7" font-size="14.5">250</text><text class="m" x="791.02" y="508.7" font-size="14.5">300</text><text class="m" x="819.16" y="508.7" font-size="14.5">350</text><text class="m" x="568.1" y="674.1" font-size="14.5">-20</text><text class="m" x="672.85" y="674.1" font-size="14.5">-15</text><text class="m" x="777.6" y="674.1" font-size="14.5">-10</text><text class="m" x="882.35" y="674.1" font-size="14.5">-5</text><text class="m" x="987.1" y="674.1" font-size="14.5">0</text><text class="m" x="1091.85" y="674.1" font-size="14.5">5</text><text class="m" x="1189.4" y="508.7" font-size="14.5" text-anchor="end">deg</text><text class="m" x="1189.4" y="674.1" font-size="14.5" text-anchor="end">ms</text><line x1="760.3" y1="487" x2="760.3" y2="681.7" stroke="#1c2cd8" stroke-width="2.8"/></svg>
<svg style="left:460px;top:694px" width="734" height="195" viewBox="460 694 734 195"><rect x="460.5" y="694" width="732.5" height="195" fill="#000"/><rect x="589.5" y="694" width="76.4" height="195" fill="#0a0a84"/><rect x="954.7" y="694" width="76.1" height="195" fill="#0a0a84"/><line x1="507.2" y1="694" x2="507.2" y2="889" stroke="#4ebc4e" stroke-width="1.2"/><line x1="553" y1="694" x2="553" y2="889" stroke="#4ebc4e" stroke-width="1.2"/><line x1="598.8" y1="694" x2="598.8" y2="889" stroke="#4ebc4e" stroke-width="1.2"/><line x1="644.6" y1="694" x2="644.6" y2="889" stroke="#c8286e" stroke-width="1.2"/><line x1="690.4" y1="694" x2="690.4" y2="889" stroke="#4ebc4e" stroke-width="1.2"/><line x1="736.2" y1="694" x2="736.2" y2="889" stroke="#4ebc4e" stroke-width="1.2"/><line x1="782" y1="694" x2="782" y2="889" stroke="#4ebc4e" stroke-width="1.2"/><line x1="827.8" y1="694" x2="827.8" y2="889" stroke="#e0283a" stroke-width="1.2"/><line x1="873.6" y1="694" x2="873.6" y2="889" stroke="#4ebc4e" stroke-width="1.2"/><line x1="919.4" y1="694" x2="919.4" y2="889" stroke="#4ebc4e" stroke-width="1.2"/><line x1="965.2" y1="694" x2="965.2" y2="889" stroke="#4ebc4e" stroke-width="1.2"/><line x1="1011" y1="694" x2="1011" y2="889" stroke="#c8286e" stroke-width="1.2"/><line x1="1056.8" y1="694" x2="1056.8" y2="889" stroke="#4ebc4e" stroke-width="1.2"/><line x1="1102.6" y1="694" x2="1102.6" y2="889" stroke="#4ebc4e" stroke-width="1.2"/><line x1="1148.4" y1="694" x2="1148.4" y2="889" stroke="#4ebc4e" stroke-width="1.2"/><line x1="460.5" y1="792" x2="1193" y2="792" stroke="#fff" stroke-width="1.4"/><path d="M636.3 788.17L639.3 787.44L641.6 785.74L642.8 783.17L643.3 778.75L643.6 772.13L643.7 761.09L643.8 758.88L643.8 751.52L643.8 731.65L643.8 719.5L643.92 718.4L645.5 718.4L645.8 719.5L646.1 731.65L646.8 751.52L647.3 758.88L648.1 761.09L649 772.13L650.3 778.75L651.9 783.17L653.8 785.74L655.6 787.44L656.5 788.17L656.5 795.83L655.6 796.56L653.8 798.26L651.9 800.83L650.3 805.25L649 811.87L648.1 822.91L647.3 825.12L646.8 832.48L646.1 852.35L645.8 864.5L645.5 865.6L643.92 865.6L643.8 864.5L643.8 852.35L643.8 832.48L643.8 825.12L643.7 822.91L643.6 811.87L643.3 805.25L642.8 800.83L641.6 798.26L639.3 796.56L636.3 795.83z" fill="#fff"/><rect x="617.9" y="788.7" width="8.3" height="6.6" rx="2.2" fill="#fff"/><rect x="625" y="790.5" width="9" height="3" rx="1.05" fill="#fff"/><rect x="633" y="791.1" width="7" height="1.8" rx="0.63" fill="#fff"/><rect x="637" y="787.6" width="18.5" height="8.8" rx="3.8" fill="#fff"/><rect x="654" y="789.1" width="11.9" height="5.8" rx="2.03" fill="#fff"/><rect x="665" y="790.2" width="40" height="3.6" rx="1.26" fill="#fff"/><path d="M1001.8 788.13L1004.8 787.38L1007.1 785.67L1008.3 783.06L1008.8 778.59L1009.1 771.88L1009.2 760.71L1009.3 758.48L1009.3 751.02L1009.3 730.91L1009.3 718.62L1009.47 717.5L1011.5 717.5L1011.8 718.62L1012.1 730.91L1012.8 751.02L1013.3 758.48L1014.1 760.71L1015 771.88L1016.3 778.59L1017.9 783.06L1019.8 785.67L1021.6 787.38L1022.5 788.13L1022.5 795.9L1021.6 796.65L1019.8 798.38L1017.9 801L1016.3 805.5L1015 812.25L1014.1 823.5L1013.3 825.75L1012.8 833.25L1012.1 853.5L1011.8 865.88L1011.5 867L1009.47 867L1009.3 865.88L1009.3 853.5L1009.3 833.25L1009.3 825.75L1009.2 823.5L1009.1 812.25L1008.8 805.5L1008.3 801L1007.1 798.38L1004.8 796.65L1001.8 795.9z" fill="#fff"/><rect x="984.3" y="788.9" width="11.7" height="6.2" rx="2.17" fill="#fff"/><rect x="995" y="791" width="8" height="2" rx="0.7" fill="#fff"/><rect x="1000.8" y="788" width="23.8" height="8" rx="3.6" fill="#fff"/><rect x="1023" y="789.4" width="24.5" height="5.2" rx="1.82" fill="#fff"/><rect x="1046.5" y="790.5" width="32.3" height="3" rx="1.05" fill="#fff"/><rect x="1080" y="790.6" width="2.8" height="2.8" rx="0.98" fill="#fff"/></svg>
</div>
</div>
</div>
</body></html>
